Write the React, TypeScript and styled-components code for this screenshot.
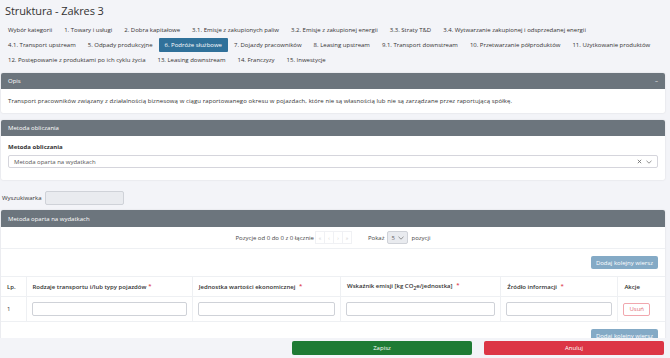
import styled, { createGlobalStyle } from 'styled-components';

const GlobalStyle = createGlobalStyle`
  *, *::before, *::after {
    box-sizing: border-box;
  }
  body {
    margin: 0;
    background: #f3f4f8;
    font-family: 'Open Sans', 'DejaVu Sans', sans-serif;
    color: #333;
  }
`;

const Page = styled.div`
  padding: 0 5px 24px 1px;
`;

const Title = styled.h1`
  margin: 0;
  padding: 3px 4px 0;
  height: 20px;
  font-size: 11px;
  font-weight: 400;
  line-height: 16px;
  letter-spacing: -0.1px;
  color: #333;
`;

const Tabs = styled.div`
  display: flex;
  flex-wrap: wrap;
  row-gap: 1px;
  padding: 3px 1px 0;
`;

const Tab = styled.div<{ $active?: boolean }>`
  height: 14px;
  line-height: 14px;
  padding: 0 6px;
  font-size: 6px;
  white-space: nowrap;
  border-radius: 1px;
  color: ${(p) => (p.$active ? '#fff' : '#333')};
  background: ${(p) => (p.$active ? '#30719a' : 'transparent')};
`;

const Card = styled.div<{ $gap?: number }>`
  background: #fff;
  border-radius: 2px;
  box-shadow: 0 0 2px rgba(0, 0, 0, 0.12);
  margin-top: ${(p) => p.$gap ?? 6}px;
`;

const CardHeader = styled.div<{ $h?: number }>`
  display: flex;
  align-items: center;
  justify-content: space-between;
  height: ${(p) => p.$h ?? 16}px;
  padding: 0 7px;
  background: #6c757d;
  color: #fff;
  font-size: 6px;
  border-radius: 2px 2px 0 0;
`;

const CardBody = styled.div<{ $pad?: string }>`
  padding: ${(p) => p.$pad ?? '0 7px'};
  font-size: 6px;
`;

const Desc = styled.p`
  margin: 0;
  line-height: 24px;
  font-size: 6px;
  letter-spacing: 0.08px;
`;

const Label = styled.div`
  font-weight: 700;
  font-size: 6px;
  line-height: 8px;
  margin-bottom: 4px;
`;

const Select = styled.div`
  display: flex;
  align-items: center;
  height: 13px;
  border: 1px solid #d5d5dc;
  border-radius: 2px;
  padding: 0 5px;
  color: #555;
  font-size: 6px;
`;

const SelectText = styled.span`
  flex: 1;
`;

const SelectIcons = styled.span`
  display: flex;
  align-items: center;
  gap: 4px;
`;

const SearchRow = styled.div`
  display: flex;
  align-items: center;
  gap: 3px;
  margin-top: 11px;
  padding-left: 1px;
  font-size: 6px;
`;

const SearchInput = styled.div`
  width: 79px;
  height: 14px;
  background: #e9ebef;
  border: 1px solid #cfd2d8;
  border-radius: 2px;
`;

const PagerRow = styled.div`
  display: flex;
  justify-content: center;
  align-items: center;
  height: 22px;
  border-bottom: 1px solid #eef0f3;
  font-size: 6px;
  color: #444;
`;

const PagerButtons = styled.div`
  display: flex;
  margin: 0 16px 0 2px;
`;

const PagerButton = styled.div`
  width: 10px;
  height: 13px;
  line-height: 13px;
  text-align: center;
  border: 1px solid #f0f1f4;
  margin-left: -1px;
  color: #ccc;
  font-size: 5px;
`;

const PageSize = styled.div`
  display: flex;
  align-items: center;
  justify-content: space-between;
  width: 21px;
  height: 13px;
  padding: 0 3px;
  margin: 0 3px;
  border: 1px solid #cfd2d8;
  border-radius: 2px;
  background: #e9ebef;
  color: #666;
`;

const ButtonRow = styled.div`
  display: flex;
  justify-content: flex-end;
  padding: 7px 7px;
`;

const AddButton = styled.button`
  height: 13px;
  padding: 0 5px;
  border: none;
  border-radius: 2px;
  background: #84aac6;
  color: #fff;
  font-family: inherit;
  font-size: 6px;
`;

const Table = styled.table`
  width: 100%;
  border-collapse: collapse;
  table-layout: fixed;
  font-size: 6px;
`;

const Th = styled.th<{ $w: number }>`
  width: ${(p) => p.$w}px;
  height: 20px;
  text-align: left;
  font-weight: 600;
  padding: 0 6px;
  border-top: 1px solid #eef0f3;
  border-bottom: 1px solid #eef0f3;
  border-left: 1px solid #eef0f3;
  white-space: nowrap;
  &:first-child {
    border-left: none;
  }
`;

const Td = styled.td`
  height: 25px;
  padding: 0 5px;
  border-bottom: 1px solid #eef0f3;
  border-left: 1px solid #eef0f3;
  &:first-child {
    border-left: none;
    padding-left: 6px;
  }
`;

const Star = styled.span`
  color: #dc3545;
  margin-left: 2px;
  vertical-align: 1px;
`;

const Input = styled.div`
  height: 14px;
  border: 1px solid #cfd2d8;
  border-radius: 2px;
  background: #fff;
`;

const DeleteButton = styled.button`
  height: 13px;
  padding: 0 5px;
  border: 1px solid #f1a7ae;
  border-radius: 2px;
  background: #fff;
  color: #e06a75;
  font-family: inherit;
  font-size: 6px;
`;

const Footer = styled.div`
  position: fixed;
  left: 0;
  right: 0;
  bottom: 0;
  height: 20px;
  display: flex;
  align-items: center;
  justify-content: flex-end;
  gap: 12px;
  padding-right: 6px;
  background: #f3f4f8;
`;

const FooterButton = styled.button<{ $color: string }>`
  width: 180px;
  height: 14px;
  border: none;
  border-radius: 2px;
  background: ${(p) => p.$color};
  color: #fff;
  font-family: inherit;
  font-size: 6px;
`;

const tabs = [
  'Wybór kategorii',
  '1. Towary i usługi',
  '2. Dobra kapitałowe',
  '3.1. Emisje z zakupionych paliw',
  '3.2. Emisje z zakupionej energii',
  '3.3. Straty T&D',
  '3.4. Wytwarzanie zakupionej i odsprzedanej energii',
  '4.1. Transport upstream',
  '5. Odpady produkcyjne',
  '6. Podróże służbowe',
  '7. Dojazdy pracowników',
  '8. Leasing upstream',
  '9.1. Transport downstream',
  '10. Przetwarzanie półproduktów',
  '11. Użytkowanie produktów',
  '12. Postępowanie z produktami po ich cyklu życia',
  '13. Leasing downstream',
  '14. Franczyzy',
  '15. Inwestycje',
];

const Chevron = () => (
  <svg width="6" height="4" viewBox="0 0 6 4">
    <path d="M0.5 0.8 L3 3.2 L5.5 0.8" fill="none" stroke="#777" strokeWidth="0.8" />
  </svg>
);

const Cross = () => (
  <svg width="5" height="5" viewBox="0 0 5 5">
    <path d="M0.8 0.8 L4.2 4.2 M4.2 0.8 L0.8 4.2" stroke="#666" strokeWidth="0.8" />
  </svg>
);

const App = () => (
  <>
    <GlobalStyle />
    <Page>
      <Title>Struktura - Zakres 3</Title>
      <Tabs>
        {tabs.map((t) => (
          <Tab key={t} $active={t === '6. Podróże służbowe'}>
            {t}
          </Tab>
        ))}
      </Tabs>

      <Card>
        <CardHeader>
          <span>Opis</span>
          <span>–</span>
        </CardHeader>
        <CardBody>
          <Desc>
            Transport pracowników związany z działalnością biznesową w ciągu raportowanego okresu w
            pojazdach, które nie są własnością lub nie są zarządzane przez raportującą spółkę.
          </Desc>
        </CardBody>
      </Card>

      <Card $gap={7}>
        <CardHeader>Metoda obliczania</CardHeader>
        <CardBody $pad="7px 7px 12px">
          <Label>Metoda obliczania</Label>
          <Select>
            <SelectText>Metoda oparta na wydatkach</SelectText>
            <SelectIcons>
              <Cross />
              <Chevron />
            </SelectIcons>
          </Select>
        </CardBody>
      </Card>

      <SearchRow>
        <span>Wyszukiwarka</span>
        <SearchInput />
      </SearchRow>

      <Card $gap={5}>
        <CardHeader $h={17}>Metoda oparta na wydatkach</CardHeader>
        <PagerRow>
          <span>Pozycje od 0 do 0 z 0 łącznie</span>
          <PagerButtons>
            <PagerButton>«</PagerButton>
            <PagerButton>‹</PagerButton>
            <PagerButton>›</PagerButton>
            <PagerButton>»</PagerButton>
          </PagerButtons>
          <span>Pokaż</span>
          <PageSize>
            <span>5</span>
            <Chevron />
          </PageSize>
          <span>pozycji</span>
        </PagerRow>
        <ButtonRow>
          <AddButton>Dodaj kolejny wiersz</AddButton>
        </ButtonRow>
        <Table>
          <thead>
            <tr>
              <Th $w={25}>Lp.</Th>
              <Th $w={166}>
                Rodzaje transportu i/lub typy pojazdów<Star>*</Star>
              </Th>
              <Th $w={148}>
                Jednostka wartości ekonomicznej <Star>*</Star>
              </Th>
              <Th $w={160}>
                Wskaźnik emisji [kg CO<sub>2</sub>e/jednostka] <Star>*</Star>
              </Th>
              <Th $w={117}>
                Źródło informacji <Star>*</Star>
              </Th>
              <Th $w={47}>Akcje</Th>
            </tr>
          </thead>
          <tbody>
            <tr>
              <Td>1</Td>
              <Td>
                <Input />
              </Td>
              <Td>
                <Input />
              </Td>
              <Td>
                <Input />
              </Td>
              <Td>
                <Input />
              </Td>
              <Td>
                <DeleteButton>Usuń</DeleteButton>
              </Td>
            </tr>
          </tbody>
        </Table>
        <ButtonRow>
          <AddButton>Dodaj kolejny wiersz</AddButton>
        </ButtonRow>
      </Card>
    </Page>
    <Footer>
      <FooterButton $color="#1e7b34">Zapisz</FooterButton>
      <FooterButton $color="#dc3545">Anuluj</FooterButton>
    </Footer>
  </>
);

export default App;
